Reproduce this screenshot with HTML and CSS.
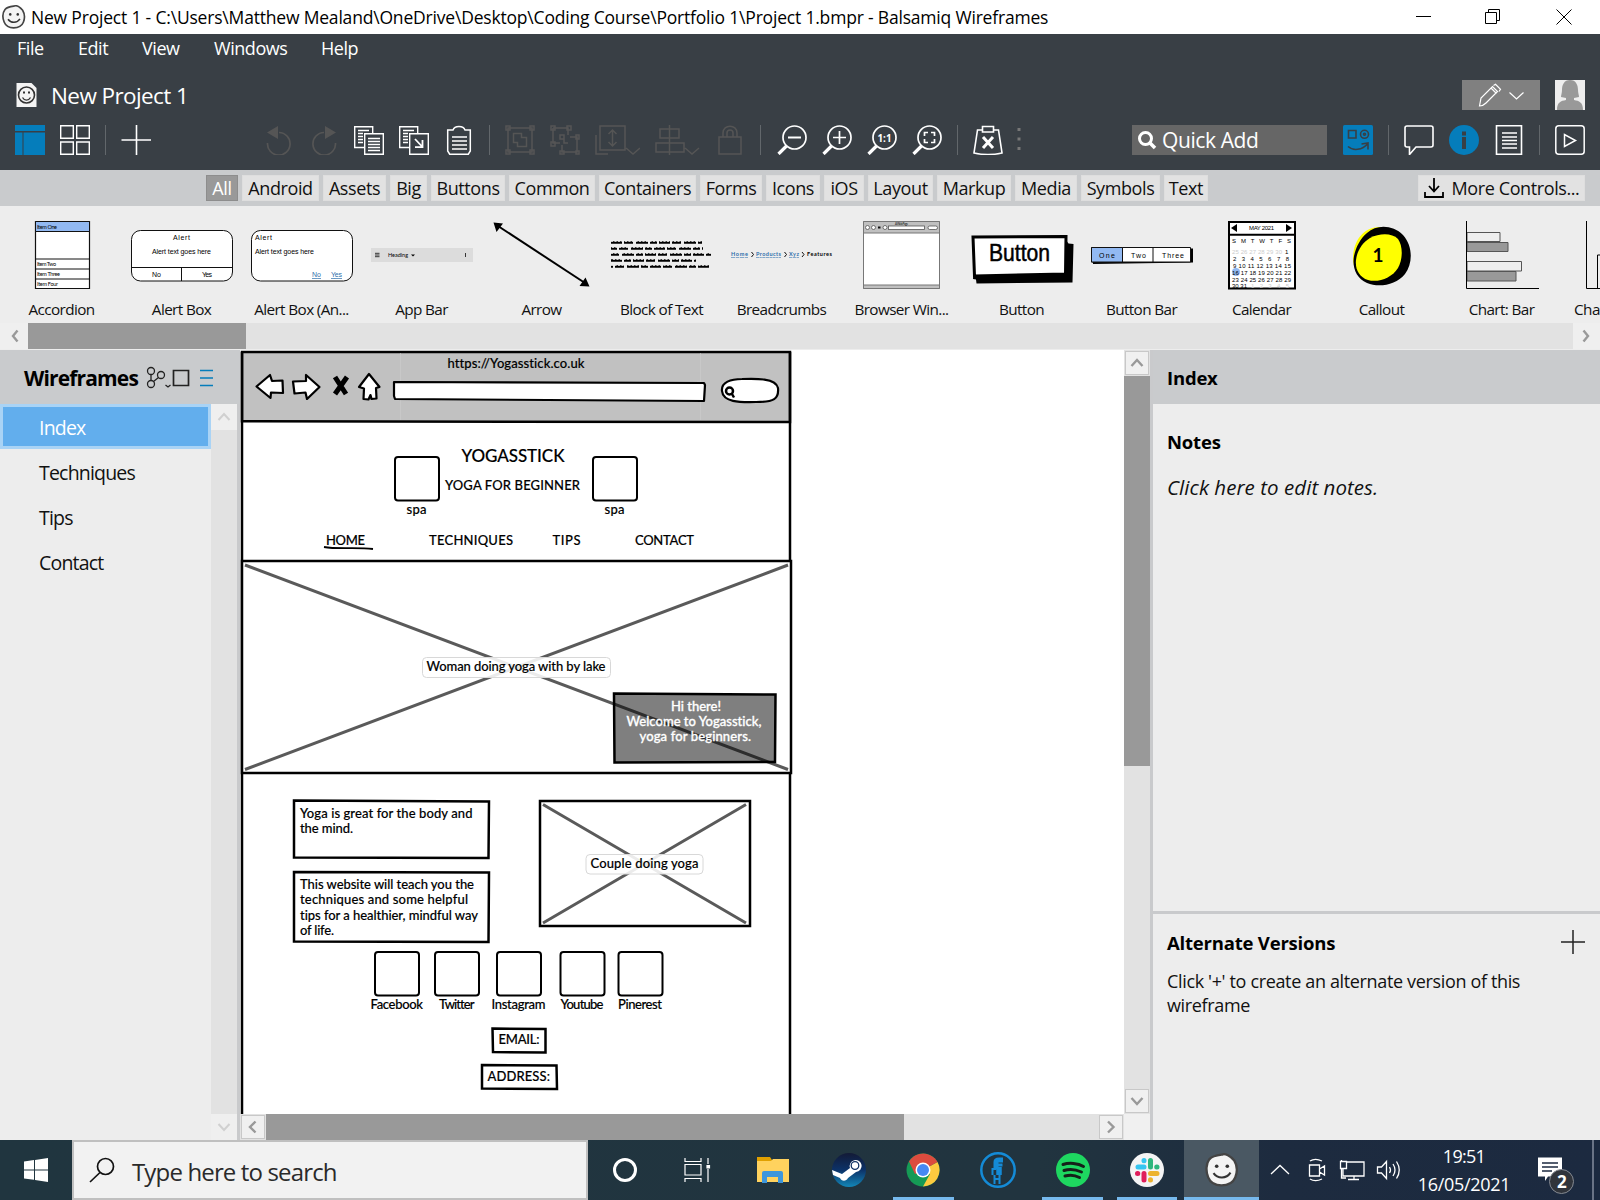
FILE: index.html
```html
<!DOCTYPE html>
<html lang="en">
<head>
<meta charset="utf-8">
<title>New Project 1 - Balsamiq Wireframes</title>
<link rel="stylesheet" href="styles.css">
</head>
<body>
<svg width="0" height="0" class="defs">
  <defs>
    <symbol id="smiley" viewBox="0 0 32 32"><path d="M16 1.500C19 0 24 3 27.500 7c3 5 3 11 1 16-2 5-7 7.500-13 7.500S5 28 3 23C.5 17 1 10 4 6c3-3.500 8-4 12-4.500z" fill="#f4f4f4" stroke="#444" stroke-width="2.200"/><circle cx="11" cy="12.500" r="1.700" fill="#333"/><circle cx="21" cy="12.500" r="1.700" fill="#333"/><path d="M8 19c4 5.500 12 5.500 16-.5" fill="none" stroke="#333" stroke-width="2"/></symbol>
  </defs>
</svg>
<header class="titlebar">
  <svg class="app-icon" width="24" height="24"><use href="#smiley"/></svg>
  <span class="window-title">New Project 1 - C:\Users\Matthew Mealand\OneDrive\Desktop\Coding Course\Portfolio 1\Project 1.bmpr - Balsamiq Wireframes</span>
  <svg class="window-buttons" width="186" height="34" fill="none" stroke="#000"><path d="M2 16.500h15M71.500 12.500h11v11h-11zM74.500 12.500v-3h11v11h-3M142.500 9.500l15 15M157.500 9.500l-15 15"/></svg>
</header>
<section class="chrome">
  <nav class="menu"><span class="m1">File</span><span class="m2">Edit</span><span class="m3">View</span><span class="m4">Windows</span><span class="m5">Help</span></nav>
  <div class="project">
    <svg width="22" height="26"><path d="M1.500 1h15l5 5v19h-20z" fill="#f4f4f4"/><circle cx="11.500" cy="13" r="8" fill="none" stroke="#333" stroke-width="1.600"/><path d="M7.500 15.500c2 3.500 6 3.500 8 0" fill="none" stroke="#333" stroke-width="1.400"/><path d="M8 10.500h2M13 10.500h2" stroke="#333" stroke-width="1.800"/></svg>
    <h1>New Project 1</h1>
    <div class="edit-mode"><svg width="78" height="30" fill="none" stroke="#fff" stroke-width="1.200"><path d="M17.500 26l1.500-8L30.500 6.500l5 5L24 23q-3 3-6.500 3zM29 8l5.500 5.500M31.500 5.500l2-1.200 5 5-1.500 2.200"/><path d="M47.500 12.500l7 6.500 7-6.500"/></svg></div>
    <svg class="avatar" width="30" height="30"><path fill="#eee" d="M0 0h30v30H0z"/><path fill="#999" d="M15 0c6 0 8 5 8 10 0 3 1 5 1 7l-5 1v2c5 1 9 2 9 10H2c0-8 4-9 9-10v-2l-5-1c0-2 1-4 1-7 0-5 2-10 8-10z"/></svg>
  </div>
  <div class="toolbar">
    <svg width="30" height="30"><path fill="#057dbb" d="M0 0h30v6H0zM0 7.500h7.500V30H0zM8.500 7.500H30V30H8.500z"/></svg>
    <svg width="30" height="30" fill="none" stroke="#fff" stroke-width="1.400"><path d="M.7.700h12.600v12.600H.7zM16.700.7h12.600v12.600H16.700zM.7 17h12.600v12.300H.7zM16.700 17h12.600v12.300H16.700z"/></svg>
    <i class="sep"></i>
    <svg width="30" height="30"><path d="M15.500 0v30M.5 15h30" stroke="#fff" stroke-width="1.600"/></svg>
    <svg class="undo" width="30" height="30" fill="none" stroke="#555" stroke-width="1.700"><path d="M3.500 18A11.300 11.300 0 1 0 15 7.500"/><path d="M3 7.500L14 1v13z" fill="#555" stroke="none"/></svg>
    <svg width="30" height="30" fill="none" stroke="#555" stroke-width="1.700"><path d="M26.500 18A11.300 11.300 0 1 1 15 7.500"/><path d="M27 7.500L16 1v13z" fill="#555" stroke="none"/></svg>
    <svg width="30" height="30" fill="none" stroke="#fff" stroke-width="1.400"><path d="M10 22.500H.7V1.700h18V8M10.700 8.700h18.600v20.600H10.700zM4 5.500h11M4 8.500h5M4 11.500h5M4 14.500h5M4 17.500h5M14 13.500h12M14 16.500h12M14 19.500h12M14 22.500h12M14 25.500h12"/></svg>
    <svg width="30" height="30" fill="none" stroke="#fff" stroke-width="1.400"><path d="M10 22.500H.7V1.700h18V8M10.700 8.700h18.600v20.600H10.700zM4 5.500h11M4 8.500h5M4 11.500h5M4 14.500h5M4 17.500h5"/><path stroke-width="1.800" d="M16 14l7.500 8M23.500 15v7.200H16"/></svg>
    <svg width="30" height="30" fill="none" stroke="#fff" stroke-width="1.500"><path d="M9 5H3.700v21l2 3.200h18.600l2-3.200V5H21c-1-3-2.500-3.500-6-3.500S10 2 9 5zM8 12h15M8 16h15M8 20h15M8 24h15"/></svg>
    <i class="sep"></i>
    <svg width="30" height="30" fill="none" stroke="#555" stroke-width="1.500"><path d="M3 3h24v24H3zM1 1h4v4H1zM25 1h4v4h-4zM1 25h4v4H1zM25 25h4v4h-4zM8.500 8.500h8v4h5v9h-9v-4h-4z"/></svg>
    <svg width="30" height="30" fill="none" stroke="#555" stroke-width="1.500"><path d="M3 3h15v7M3 3v15h7M1 1h4v4H1zM17 1h4v4h-4zM1 17h4v4H1zM20 12h7v15H12v-7M10 26h4v3h-4zM26 10h3v4h-3zM26 26h3v3h-3zM10 10h4v4h-4zM18 18h-4v-4"/></svg>
    <svg width="45" height="30" fill="none" stroke="#555" stroke-width="1.500"><path d="M5 1h25v24H5zM1 10v19h12M17.500 5v16M13.500 9l4-4 4 4M13.500 17l4 4 4-4M31 23l7 6 7-6"/></svg>
    <svg width="45" height="30" fill="none" stroke="#555" stroke-width="1.500"><path d="M14.500 0v30M5 4h19v9H5zM1 18h28v9H1zM30 23l7 6 7-6"/></svg>
    <svg width="30" height="30" fill="none" stroke="#555" stroke-width="1.500"><path d="M4 12h22v17H4zM8 12V8c0-9 14-9 14 0v4M12 12V8c0-4 6-4 6 0v4"/></svg>
    <i class="sep"></i>
    <svg class="zoom-out" width="30" height="30" fill="none" stroke="#fff" stroke-width="1.700"><circle cx="17.500" cy="12.500" r="11.500"/><path stroke-width="3.200" d="M9.500 21l-8 8"/><path stroke-width="2" d="M11 12.500h13"/></svg>
    <svg width="30" height="30" fill="none" stroke="#fff" stroke-width="1.700"><circle cx="17.500" cy="12.500" r="11.500"/><path stroke-width="3.200" d="M9.500 21l-8 8"/><path d="M11 12.500h13M17.500 6v13"/></svg>
    <svg width="30" height="30" fill="none" stroke="#fff" stroke-width="1.700"><circle cx="17.500" cy="12.500" r="11.500"/><path stroke-width="3.200" d="M9.500 21l-8 8"/><text x="10.500" y="17" class="ratio" textLength="14" lengthAdjust="spacingAndGlyphs">1:1</text></svg>
    <svg width="30" height="30" fill="none" stroke="#fff" stroke-width="1.700"><circle cx="17.500" cy="12.500" r="11.500"/><path stroke-width="3.200" d="M9.500 21l-8 8"/><path d="M12.500 11V7.500H16M19 7.500h3.500V11M22.500 14v3.500H19M16 17.500h-3.500V14"/></svg>
    <i class="sep"></i>
    <svg width="30" height="30" fill="none" stroke="#fff" stroke-width="1.600"><path d="M9.500 5H4.500L1 28c8 1.800 20 1.800 28 0L25.500 5H20M9.500 1.500h11v5.500h-11z"/><path stroke-width="3" d="M10 12l10 11M20 12L10 23"/></svg>
    <svg class="more" width="4" height="24" fill="#777"><path d="M.5 0h3v3h-3zM.5 9.500h3v3h-3zM.5 19h3v3h-3z"/></svg>
    <div class="quick"><svg width="20" height="20" fill="none" stroke="#fff"><circle cx="8.500" cy="8.500" r="6" stroke-width="3"/><path d="M13 13l5 5" stroke-width="3.500"/></svg><span>Quick Add</span></div>
    <svg width="30" height="30" fill="none" stroke="#393f45" stroke-width="1.600"><rect width="30" height="30" rx="1.500" fill="#057dbb" stroke="none"/><path d="M5.500 5.500h7.500v7.500H5.500zM5 21.500c5 4.500 14 4 20-3M18.500 19l6.500-1v6.500"/><circle cx="21.500" cy="9.300" r="4"/><circle cx="21.500" cy="9.300" r="1"/></svg>
    <i class="sep"></i>
    <svg width="30" height="30" fill="none" stroke="#fff" stroke-width="1.600"><path d="M3 1h24q2 0 2 2v17q0 2-2 2H12l-6.500 7.500V22H3q-2 0-2-2V3q0-2 2-2z"/></svg>
    <svg width="30" height="30"><circle cx="15" cy="15" r="15" fill="#057dbb"/><path fill="#393f45" d="M13 6.500h4v4h-4zM13 12h4v12h-4z"/></svg>
    <svg width="30" height="30" fill="none" stroke="#fff" stroke-width="1.600"><path d="M2.500.8h25v28.400h-25zM8 8h15M8 12h15M8 15.500h15M8 19h15M8 23h15"/></svg>
    <i class="sep"></i>
    <svg width="30" height="30" fill="none" stroke="#fff" stroke-width="1.500"><rect x=".8" y=".8" width="28.400" height="28.400" rx="3"/><path d="M9.500 9.500v12l11-6z"/></svg>
  </div>
</section>
<nav class="tabs">
  <div class="tab-list"><span class="tab on">All</span><span class="tab">Android</span><span class="tab">Assets</span><span class="tab">Big</span><span class="tab">Buttons</span><span class="tab">Common</span><span class="tab">Containers</span><span class="tab">Forms</span><span class="tab">Icons</span><span class="tab">iOS</span><span class="tab">Layout</span><span class="tab">Markup</span><span class="tab">Media</span><span class="tab">Symbols</span><span class="tab">Text</span></div>
  <span class="tab more-controls"><svg width="20" height="20" fill="none" stroke="#000" stroke-width="1.800"><path d="M1 14v5h18v-5M10 0v13M5 8l5 5.500L15 8"/></svg>More Controls...</span>
</nav>
<section class="library">
  <figure><svg viewBox="0 0 120 84" class="tiny"><path fill="#fff" stroke="#111" stroke-width="1.200" d="M34.500 15.500h54v67h-54z"/><path fill="#92b9f2" stroke="#111" d="M34.500 15.500h54v10h-54z"/><path stroke="#111" d="M34 53h55M34 63h55M34 73h55"/><text x="36" y="22.500" textLength="20">Item One</text><text x="36" y="60" textLength="19">Item Two</text><text x="36" y="70" textLength="23">Item Three</text><text x="36" y="80" textLength="21">Item Four</text></svg><figcaption>Accordion</figcaption></figure>
  <figure><svg viewBox="0 0 120 84" class="small"><rect x="10.500" y="24.500" width="101" height="50.500" rx="9" fill="#fff" stroke="#111"/><path stroke="#111" d="M11 61.500h100M60.500 62v13"/><text x="52" y="34" textLength="17">Alert</text><text x="31" y="48" textLength="59">Alert text goes here</text><text x="31" y="71" textLength="9">No</text><text x="81" y="71" textLength="10">Yes</text></svg><figcaption>Alert Box</figcaption></figure>
  <figure><svg viewBox="0 0 120 84" class="small"><rect x="10.500" y="24.500" width="101" height="50.500" rx="9" fill="#fff" stroke="#111"/><text x="14" y="34" textLength="17">Alert</text><text x="14" y="48" textLength="59">Alert text goes here</text><g class="link"><text x="71" y="71" textLength="9">No</text><text x="90" y="71" textLength="11">Yes</text></g></svg><figcaption>Alert Box (An...</figcaption></figure>
  <figure><svg viewBox="0 0 120 84" class="tiny"><path fill="#dcdcdc" d="M10 42h102v14H10z"/><path stroke="#222" stroke-width=".9" d="M14 47.300h4.500M14 49h4.500M14 50.700h4.500M104.500 47v4"/><text x="27" y="51" textLength="20">Heading</text><path d="M50 48.500h4l-2 2z"/></svg><figcaption>App Bar</figcaption></figure>
  <figure><svg viewBox="0 0 120 84"><path stroke="#000" stroke-width="2" d="M17 20l87 57"/><path d="M12.500 16.500l9.500 1-6.500 8.500zM108.500 80.500l-10-.5 6-8.500z"/></svg><figcaption>Arrow</figcaption></figure>
  <figure><svg viewBox="0 0 120 84" stroke="#000" stroke-width="2.500"><g stroke-dasharray="11 2 9 3 12 2 7 2"><path d="M10 36.500h91"/><path d="M10 42.500h92" stroke-dashoffset="5"/><path d="M10 48.500h100" stroke-dashoffset="14"/><path d="M10 54.500h85" stroke-dashoffset="26"/><path d="M10 60.500h99" stroke-dashoffset="9"/></g><g stroke="#ededed" stroke-width="1" stroke-dasharray="2 1.500"><path d="M10 35.300h100"/><path d="M11 41.300h100"/><path d="M10 47.300h100"/><path d="M12 53.300h100"/><path d="M10 59.300h100"/></g></svg><figcaption>Block of Text</figcaption></figure>
  <figure><svg viewBox="0 0 120 84" class="tiny bold"><g class="link"><text x="10" y="50" textLength="17">Home</text><text x="35" y="50" textLength="25">Products</text><text x="68" y="50" textLength="10">Xyz</text></g><path fill="none" stroke="#111" d="M30.500 46l2 2.500-2 2.500M63.500 46l2 2.500-2 2.500M81 46l2 2.500-2 2.500"/><text x="86" y="50" textLength="25">Features</text></svg><figcaption>Breadcrumbs</figcaption></figure>
  <figure><svg viewBox="0 0 120 84" class="tiny"><path fill="#fff" stroke="#777" d="M22.500 15.500h76v67h-76z"/><path fill="#c0c0c0" stroke="#777" d="M22.500 15.500h76v11.500h-76zM22.500 79h76v3.500h-76z"/><g fill="#fff" stroke="#555" stroke-width=".8"><circle cx="26.500" cy="21.500" r="2"/><circle cx="32.500" cy="21.500" r="2"/><circle cx="44" cy="21.500" r="2"/><rect x="47.500" y="20" width="36" height="3.500"/><rect x="87" y="20" width="9.500" height="3.500" rx="1.700"/></g><path stroke="#111" stroke-width="2" d="M37 21.500h2.500"/><text x="54" y="18.800" class="micro" textLength="13">A Web Page</text></svg><figcaption>Browser Win...</figcaption></figure>
  <figure><svg viewBox="0 0 120 84"><path d="M15 36l91-.5 1.500 2 5 .5-1 38.500-96 1-.5-4-3-.5z"/><path fill="#fff" stroke="#000" stroke-width="3" d="M12 31l93-.5-.5 37.500-91 2z"/><text class="btn" x="28" y="55" textLength="61" lengthAdjust="spacingAndGlyphs">Button</text></svg><figcaption>Button</figcaption></figure>
  <figure><svg viewBox="0 0 120 84" class="small"><path d="M12 43l100-.5v14L12 58z"/><path fill="#fff" stroke="#111" d="M10.500 41.500h99v14.500h-99z"/><path fill="#92b9f2" stroke="#111" d="M10.500 41.500h31V56h-31z"/><path stroke="#111" d="M72 41.500V56"/><text x="18" y="51.500" textLength="16">One</text><text x="50" y="51.500" textLength="15">Two</text><text x="81" y="51.500" textLength="22">Three</text></svg><figcaption>Button Bar</figcaption></figure>
  <figure><svg viewBox="0 0 120 84" class="cal"><path fill="#fff" stroke="#000" stroke-width="2" d="M28 16h66v66.500H28zM28 28.700h66"/><path d="M36 18v8l-6-4zM85 18v8l6-4z"/><circle cx="35" cy="66" r="4" fill="#92b9f2"/><text x="48" y="24" textLength="25">MAY 2021</text><text x="31" y="36.500" textLength="59">S&#160; M&#160; T&#160; W&#160; T&#160; F&#160; S</text><text x="31" y="47.500" textLength="50" fill="#ccc">25 26 27 28 29 30</text><text x="84" y="47.500">1</text><text x="32" y="55" textLength="56">2&#160; 3&#160; 4&#160; 5&#160; 6&#160; 7&#160; 8</text><text x="32" y="62" textLength="58">9 10 11 12 13 14 15</text><text x="31" y="68.500" textLength="59">16 17 18 19 20 21 22</text><text x="31" y="75.500" textLength="59">23 24 25 26 27 28 29</text><text x="31" y="81.500" textLength="15">30 31</text><text x="50" y="81.500" textLength="38" fill="#ccc">1&#160; 2&#160; 3&#160; 4&#160; 5</text></svg><figcaption>Calendar</figcaption></figure>
  <figure><svg viewBox="0 0 120 84"><path fill="#ff0" d="M60 21C42 20 32 36 32 52c0 14 10 25 24 27z"/><path d="M46 27C56 18 72 19 82 29c10 11 10 28 2 39-9 11-26 14-38 9C35 72 31 61 33 50c2-9 6-17 13-23z"/><path fill="#ff0" d="M49 32c10-5 22-5 28 1 5 7 5 20 0 29-6 10-20 15-30 12-9-3-13-11-12-20 1-9 6-17 14-22z"/><text x="51.500" y="56" class="callout-number">1</text></svg><figcaption>Callout</figcaption></figure>
  <figure><svg viewBox="0 0 120 84"><g stroke="#555"><path fill="#eee" d="M26 26.500h33v9H26zM26 55.500h54.500V65H26z"/><path fill="#999" d="M26 36.500h41v9H26zM26 65.500h49V75H26z"/></g><path fill="none" stroke="#000" d="M25.500 15v67.500H98"/></svg><figcaption>Chart: Bar</figcaption></figure>
  <figure><svg viewBox="0 0 120 84"><path fill="none" stroke="#000" d="M25.500 15v67.500H98M36.500 82V49h5v33"/></svg><figcaption>Chart: Column</figcaption></figure>
</section>
<div class="library-scroll"><span><svg width="26" height="26"><path d="M16.500 7.500L12 13l4.500 5.500"/></svg></span><i></i><b></b><span><svg width="26" height="26"><path d="M9.500 7.500L14 13l-4.500 5.500"/></svg></span></div>
<main class="workspace">
  <aside class="pages">
    <header><h2>Wireframes</h2><svg width="70" height="24" fill="none" stroke="#222" stroke-width="1.300"><circle cx="5" cy="5" r="3.500"/><circle cx="5" cy="18" r="3.500"/><circle cx="15" cy="9" r="3.500"/><path d="M5 8.500v6M7.500 15.500l5-4M19.500 19l2.500 2 2.500-2"/><path stroke-width="1.700" d="M27.500 4.500h15v15h-15z"/><path stroke="#057dbb" stroke-width="1.500" d="M54 4.500h13M54 12h13M54 19.500h13"/></svg></header>
    <div class="pages-body">
      <ul><li class="on">Index</li><li>Techniques</li><li>Tips</li><li>Contact</li></ul>
      <div class="pages-scroll"><svg width="26" height="26"><path d="M7.500 16l5.500-6 5.500 6"/></svg><svg width="26" height="26"><path d="M7.500 10l5.500 6 5.500-6"/></svg></div>
    </div>
  </aside>
  <section class="editor">
    <svg class="canvas" width="884" height="764" viewBox="240 350 884 764">
      <g fill="none" stroke="#000" stroke-width="2.500">
        <path fill="#c1c1c1" d="M242 352h548v70l-548-.7z"/>
        <path d="M242 352v770M790 352v770"/>
        <path stroke="#ccc" stroke-width=".6" d="M400.500 353v67M700.500 353v67"/>
        <g fill="#fff" stroke-width="2.200" stroke-linejoin="round">
          <path d="M256.500 386.500L270 375l2 6 10.500-.5.5 12.500-12-.5-.5 5.500z"/>
          <path d="M319.500 387L306 375v6l-13 .5 1.500 12 11-1 1.500 6.500z"/>
          <path d="M359 387l10-13 10.500 13-3.500 1 .5 10.500-5 .5-1-4-2 4.500-5-.5.5-10.500z"/>
          <path d="M394 382l310 1 1 2-1 16-309-2-1-3z"/>
          <path d="M722 391c-1-9 9-12 20-12 14-.5 34-1 36 9 1 11-4 14-22 14-17 .5-33 0-34-11z"/>
        </g>
        <path stroke-width="5" d="M335 377l11 17M347 377l-12 17"/>
        <circle cx="729.500" cy="391" r="3.500"/><path d="M732 394l2 3.500"/>
        <g fill="#fff" stroke-width="2"><rect x="395" y="457" width="44" height="43.500" rx="3"/><rect x="593" y="457" width="44" height="43.500" rx="3"/><rect x="375" y="952" width="44" height="43.500" rx="3"/><rect x="435" y="952" width="44" height="43.500" rx="3"/><rect x="497" y="952" width="44" height="43.500" rx="3"/><rect x="560.500" y="952" width="44" height="43.500" rx="3"/><rect x="618.500" y="952" width="44" height="43.500" rx="3"/></g>
        <path stroke-width="1.800" d="M324 547c13 2.500 32 0 49 2"/>
        <path fill="#fff" d="M242 561h549v212H242z"/>
        <path stroke="#5a5a5a" stroke-width="3" d="M245 565l543 204.500M788 565L245 769.500"/>
        <rect x="422.500" y="657.500" width="188" height="20" rx="4" fill="#fff" fill-opacity=".88" stroke="#d8d8d8" stroke-width="1"/>
        <path fill="#000" fill-opacity=".5" d="M614 693.500l161.500 1-.5 67.500-160.500.5z"/>
        <path d="M294 800.500l195 1-.5 56.500-194.500-.5zM294 872l195 .5-.5 69.500-194.500-.5zM540 801h210v125H540z"/>
        <path stroke="#5a5a5a" stroke-width="3" d="M543 804.500l203 118.500M746 804.500L543 923"/>
        <rect x="586" y="854.500" width="117" height="19.500" rx="4" fill="#fff" fill-opacity=".88" stroke="#d8d8d8" stroke-width="1"/>
        <path d="M492.500 1028.500l53 .5v23.500l-52.500-.5zM482 1065l74.500.5.5 23.500-75-.5z"/>
      </g>
      <g class="sketch">
        <text x="447.500" y="368" textLength="137">https://Yogasstick.co.uk</text>
        <text class="brand" x="461.500" y="462" textLength="103">YOGASSTICK</text>
        <text x="445" y="490" textLength="135">YOGA FOR BEGINNER</text>
        <text x="406.500" y="514" textLength="20">spa</text><text x="604.500" y="514" textLength="20">spa</text>
        <text x="326" y="545" textLength="39">HOME</text><text x="429" y="545" textLength="84">TECHNIQUES</text><text x="552.500" y="545" textLength="28">TIPS</text><text x="635" y="545" textLength="59">CONTACT</text>
        <text x="426.500" y="671" textLength="179">Woman doing yoga with by lake</text>
        <g class="light"><text x="671" y="711" textLength="50">Hi there!</text><text x="626.500" y="726" textLength="135">Welcome to Yogasstick,</text><text x="639.500" y="741" textLength="111.500">yoga for beginners.</text></g>
        <text x="300" y="818" textLength="172.500">Yoga is great for the body and</text><text x="300" y="833" textLength="53">the mind.</text>
        <text x="300" y="889" textLength="174">This website will teach you the</text><text x="300" y="904" textLength="168">techniques and some helpful</text><text x="300" y="919.500" textLength="178">tips for a healthier, mindful way</text><text x="300" y="934.500" textLength="34">of life.</text>
        <text x="590.500" y="868" textLength="108">Couple doing yoga</text>
        <text x="370.500" y="1009" textLength="52.500">Facebook</text><text x="439" y="1009" textLength="35.500">Twitter</text><text x="491.500" y="1009" textLength="54">Instagram</text><text x="560.500" y="1009" textLength="43">Youtube</text><text x="618" y="1009" textLength="44">Pinerest</text>
        <text x="498.500" y="1043.500" textLength="41">EMAIL:</text><text x="487.500" y="1080.500" textLength="62.500">ADDRESS:</text>
      </g>
    </svg>
    <div class="vscroll"><span class="arrow"><svg width="24" height="24"><path d="M6.500 15l5.500-6 5.500 6"/></svg></span><i></i><span class="arrow end"><svg width="24" height="24"><path d="M6.500 9l5.500 6 5.500-6"/></svg></span></div>
    <div class="hscroll"><span class="arrow"><svg width="24" height="24"><path d="M14.500 6.500L9 12l5.500 5.500"/></svg></span><i></i><span class="arrow end"><svg width="24" height="24"><path d="M9 6.500l5.500 5.500L9 17.500"/></svg></span></div>
  </section>
  <aside class="inspector">
    <header><h3>Index</h3></header>
    <div class="notes"><h3>Notes</h3><p>Click here to edit notes.</p></div>
    <div class="versions"><div class="versions-head"><h3>Alternate Versions</h3><svg width="24" height="24"><path d="M12 0v24M0 12h24" stroke="#222" stroke-width="1.500"/></svg></div><p>Click '+' to create an alternate version of this<br>wireframe</p></div>
  </aside>
</main>
<footer class="taskbar">
  <div class="start"><svg width="24" height="24" fill="#fff"><path d="M0 3.500l10-1.400V11.500H0zM11 2l13-2v11.500H11zM0 12.500h10v9.300L0 20.500zM11 12.500h13V24l-13-2z"/></svg></div>
  <div class="search"><svg width="26" height="26" fill="none" stroke="#111" stroke-width="1.700"><circle cx="16.500" cy="9.500" r="8"/><path d="M11 15.500L1 25"/></svg><span>Type here to search</span></div>
  <div class="apps">
    <div class="app"><svg width="26" height="26"><circle cx="13" cy="13" r="10.500" fill="none" stroke="#fff" stroke-width="3"/></svg></div>
    <div class="app"><svg width="32" height="26" fill="none" stroke="#fff" stroke-width="1.200"><path d="M1 1v3.500h16V1M1 25v-3.500h16V25M1 7.500h16v10.500H1zM24 1v6M24 12v13"/><path fill="#fff" d="M23 8.500h2.500V11H23z"/></svg></div>
    <div class="app"><svg width="36" height="30"><path fill="#e0a000" d="M1 2h13l2 3v4H1z"/><path fill="#ffd25e" d="M1 6h14l2-2h16v23H1z"/><path fill="#3d96dc" d="M6 18q0-2 2-2h17q2 0 2 2v10h-5v-6H11v6H6z"/></svg></div>
    <div class="app"><svg width="34" height="34"><defs><linearGradient id="deep" x2="0" y2="1"><stop stop-color="#131a36"/><stop offset=".5" stop-color="#0c3268"/><stop offset="1" stop-color="#1387b8"/></linearGradient></defs><circle cx="17" cy="17" r="17" fill="url(#deep)"/><path fill="#fff" d="M0 17l10 4 8-6a6 6 0 1 1 6 4l-8 6c-2 4-7 3-8 0l-7-3z"/><circle cx="23" cy="12.500" r="3.800" fill="#fff" stroke="#123263" stroke-width="1.300"/></svg></div>
    <div class="app run"><svg width="34" height="34"><circle cx="17" cy="17" r="16.500" fill="#159a55"/><path fill="#fdca3f" d="M17 17L31.500 9A16.500 16.500 0 0 1 17 33.500L24 21z"/><path fill="#dd4b3e" d="M17 17L9 21 3 8.500A16.500 16.500 0 0 1 31.500 9z"/><circle cx="17" cy="17" r="7.500" fill="#fff"/><circle cx="17" cy="17" r="6" fill="#4688f4"/></svg></div>
    <div class="app"><svg width="36" height="36" fill="none" stroke="#148bd7"><circle cx="18" cy="18" r="16.700" stroke-width="2.500"/><path stroke-width="5" d="M16 17V10q0-2 3-2h4"/><path stroke-width="3" d="M16.500 13h6"/><path stroke-width="5.500" d="M19 15v8"/><path stroke-width="2" d="M11.500 17h5M12.500 17v6M14.500 23v9M19.500 23v9M14 27h6"/></svg></div>
    <div class="app run"><svg width="34" height="34"><circle cx="17" cy="17" r="17" fill="#1ed760"/><path fill="none" stroke="#152119" stroke-width="3" stroke-linecap="round" d="M7 11.500c6-2 15-1.500 20.500 2M8 17.500c6-2 12-1 17.500 1.500M9 23c5-1.500 10-1 14.500 1.500"/></svg></div>
    <div class="app run"><svg width="34" height="34"><circle cx="17" cy="17" r="17" fill="#f4f4f4"/><g fill="none" stroke-width="5" stroke-linecap="round"><path stroke="#36c5f0" d="M8 14h6M14 7.500v.3"/><path stroke="#2eb67d" d="M20.500 7.500V14M27 14h-.3"/><path stroke="#ecb22e" d="M20.500 20.500H27M20.500 27v-.3"/><path stroke="#e01e5a" d="M14 20.500V27M7.500 20.500h.3"/></g></svg></div>
    <div class="app run active"><svg width="34" height="34"><use href="#smiley"/></svg></div>
  </div>
  <svg class="tray" width="156" height="60" fill="none" stroke="#fff" stroke-width="1.300"><path d="M14 34l9-8.500 9 8.500"/><path d="M52.500 25h10v11h-10zM62.500 29l5-3v9l-5-3M53 21c3-2 8-2 12 0M53 39c3 2 8 2 12 0M86 22h21v14H86zM97 36v3.500M91 39.500h11M89 38h-4.500v-18"/><path fill="#1d2b3f" d="M83.500 21.500h6v7h-6z"/><path d="M120.500 27h4l5-5.500v17l-5-5.500h-4zM132.500 27q2 3 0 6M136 24q4 6 0 12M139.500 21.500q5.500 8.500 0 17"/></svg>
  <div class="clock"><span class="time">19:51</span><span class="date">16/05/2021</span></div>
  <svg class="notify" width="84" height="60"><path fill="#fff" d="M22 17.500h24v19H32l-3 4.500v-4.500h-7z"/><path stroke="#1c2a40" stroke-width="1.300" d="M26 23h16M26 27h16M26 31h10"/><circle cx="45.500" cy="41.500" r="12" fill="#30343b" stroke="#858a92"/><text x="41" y="48" class="count">2</text><path fill="#6a7486" d="M76 0h2v60h-2z"/></svg>
</footer>
</body>
</html>
```

FILE: styles.css
```css
* { box-sizing: border-box; }
body { margin: 0; width: 1600px; height: 1200px; overflow: hidden; display: flex; flex-direction: column; background: #ededed; color: #111; font-family: "Open Sans", "Noto Sans", sans-serif; font-size: 18px; }
h1, h2, h3, p, ul, figure { margin: 0; padding: 0; font-weight: normal; }
svg { display: block; flex: none; }
.defs { position: absolute; }
span, h1, h2, h3, figcaption, li { white-space: nowrap; }

.titlebar { flex: none; height: 34px; display: flex; align-items: center; background: #fff; color: #000; padding-left: 2px; }
.window-title { margin-left: 5px; font-size: 17.500px; letter-spacing: -0.190px; }
.window-buttons { margin-left: auto; }

.chrome { flex: none; height: 136px; background: #393f45; color: #fff; display: flex; flex-direction: column; }
.menu { height: 30px; display: grid; grid-template-columns: 61px 64px 72px 107px 60px; padding: 0 0 2px 17px; align-items: center; letter-spacing: -0.450px; }
.project { height: 60px; display: flex; align-items: center; padding: 2px 15px 0; }
.project h1 { font-size: 22.500px; letter-spacing: -0.600px; margin-left: 14px; }
.edit-mode { margin-left: auto; background: #808080; }
.avatar { margin-left: 15px; }
.toolbar { display: flex; align-items: center; gap: 15px; padding: 1px 15px 0; }
.sep { width: 1px; height: 30px; background: #62676b; flex: none; }
.undo { margin-left: 98px; }
.zoom-out { margin-left: 1px; }
.more { margin-left: -1px; }
.ratio { font: bold 11px "Open Sans", sans-serif; fill: #fff; stroke: none; }
.quick { margin-left: auto; margin-right: 1px; width: 195px; height: 30px; background: #666; display: flex; align-items: center; padding-left: 5px; gap: 5px; font-size: 21px; letter-spacing: -0.400px; }

.tabs { flex: none; height: 36px; background: #c9cbcd; display: flex; align-items: center; justify-content: space-between; padding: 0 15px 0 206px; }
.tab-list { display: grid; grid-template-columns: 32px 77px 63px 37px 74px 86px 97px 62px 54px 40px 65px 74px 62px 79px 44px; gap: 4px; }
.tab { height: 26px; background: #e2e2e2; border: 1px solid #dedede; display: flex; align-items: center; justify-content: center; font-size: 18px; letter-spacing: -0.400px; }
.tab.on { background: #999; border-color: #8d8d8d; color: #fff; }
.more-controls { width: 167px; gap: 8px; }

.library { flex: none; height: 117px; display: flex; overflow: hidden; padding-left: 1px; }
.library figure { flex: none; width: 120px; text-align: center; }
.library svg { width: 120px; height: 84px; font-family: Lato, sans-serif; }
.library figcaption { font-size: 15.300px; line-height: 39px; height: 33px; letter-spacing: -0.620px; padding-left: 1px; }
.library .tiny { font-size: 5.500px; }
.library .small { font-size: 7px; font-family: "Liberation Sans", sans-serif; }
.library .bold { font-weight: bold; }
.micro { font-size: 3px; }
.library .cal { font-size: 6px; font-family: "Liberation Sans", sans-serif; }
.btn { font-size: 24px; font-family: "Liberation Sans", sans-serif; stroke: #000; stroke-width: 0.500px; }
.callout-number { font-size: 19px; font-weight: bold; }
.link { fill: #2f6fab; text-decoration: underline; }
.library-scroll { flex: none; height: 27px; border-bottom: 1px solid #ededed; display: grid; grid-template-columns: 28px 218px 1fr 27px; background: #e2e2e2; }
.library-scroll span { background: #efefef; display: flex; align-items: center; justify-content: center; }
.library-scroll svg { fill: none; stroke: #999; stroke-width: 2.400; }
.library-scroll i { background: #999; }

.workspace { flex: none; height: 790px; display: grid; grid-template-columns: 240px 910px 450px; }
.pages { border-right: 3px solid #c9cacc; display: flex; flex-direction: column; }
.pages header { height: 54px; background: #c9cbcd; display: flex; align-items: center; padding-left: 24px; margin-right: -3px; padding-top: 2px; }
.pages h2 { font-size: 21px; font-weight: bold; letter-spacing: -0.850px; width: 122px; color: #000; }
.pages-body { flex: 1; display: flex; }
.pages ul { width: 211px; list-style: none; }
.pages li { height: 45px; line-height: 44px; padding: 2px 0 0 39px; font-size: 19.500px; letter-spacing: -0.800px; }
.pages li.on { background: #62aeed; border: 3px solid #a9d3f5; color: #fff; padding: 0 0 0 36px; line-height: 42px; }
.pages-scroll { width: 26px; background: #e2e2e2; display: flex; flex-direction: column; justify-content: space-between; }
.pages-scroll svg { background: #efefef; fill: none; stroke: #d0d0d0; stroke-width: 2; }

.editor { display: grid; grid-template: 764px 26px / 884px 26px; background: #f0f0f0; }
.canvas { background: #fff; }
.sketch { font-family: Lato, sans-serif; font-size: 13px; font-weight: 500; font-variant-ligatures: none; stroke: #000; stroke-width: 0.150px; }
.light { fill: #fff; stroke: #fff; stroke-width: 0.300px; }
.brand { font-size: 17px; }
.arrow { width: 24px; height: 24px; border: 1px solid #c8c8c8; background: #f0f0f0; flex: none; display: flex; align-items: center; justify-content: center; }
.arrow svg { fill: none; stroke: #999; stroke-width: 2.400; }
.vscroll { background: #e2e2e2; display: flex; flex-direction: column; align-items: center; padding: 1px 0; }
.vscroll i { width: 26px; height: 390px; background: #999; margin-top: 1px; }
.vscroll .end { margin-top: auto; }
.hscroll { background: #e2e2e2; display: flex; align-items: center; padding: 0 1px; }
.hscroll i { width: 638px; height: 26px; background: #999; margin-left: 1px; }
.hscroll .end { margin-left: auto; }

.inspector { border-left: 3px solid #c9cacc; display: flex; flex-direction: column; }
.inspector header { height: 54px; background: #c9cbcd; padding: 0 14px; line-height: 56px; }
.inspector h3 { font-size: 18.500px; font-weight: bold; letter-spacing: -0.200px; color: #000; }
.notes { height: 510px; padding: 25px 14px; border-bottom: 3px solid #c9cacc; }
.notes p { font-size: 20.500px; font-style: italic; letter-spacing: 0.050px; line-height: 28px; margin-top: 19px; }
.versions { padding: 13px 14px; }
.versions-head { display: flex; align-items: center; justify-content: space-between; height: 30px; margin-right: 1px; }
.versions p { font-size: 18px; line-height: 24px; margin-top: 12px; letter-spacing: -0.350px; }

.taskbar { flex: none; height: 60px; display: flex; background: linear-gradient(90deg, #20353f, #21343f 65%, #1d2b3f 80%, #1c2a40); color: #fff; }
.start { width: 72px; display: flex; align-items: center; justify-content: center; }
.search { width: 516px; background: #f2f2f2; border: 2px solid #c0c0c0; color: #2a2a2a; display: flex; align-items: center; padding-left: 15px; gap: 17px; font-size: 24px; letter-spacing: -0.850px; }
.search span { padding-top: 2px; }
.apps { width: 671px; display: grid; grid-template-columns: repeat(9, 1fr); }
.app { display: flex; align-items: center; justify-content: center; position: relative; }
.run::after { content: ""; position: absolute; left: 7px; right: 7px; bottom: 0; height: 3px; background: #76b9ed; }
.active { background: #4a5863; }
.active::after { left: 0; right: 0; }
.tray { margin-left: -2px; }
.clock { width: 102px; display: flex; flex-direction: column; align-items: center; font-size: 18px; line-height: 28px; padding-top: 2px; letter-spacing: -0.700px; }
.date { letter-spacing: -0.300px; }
.notify { margin-left: 1px; }
.count { font: bold 17px "Open Sans", sans-serif; fill: #fff; }
```
